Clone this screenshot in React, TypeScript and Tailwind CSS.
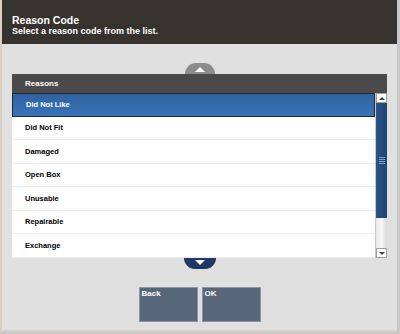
import React from "react"

const reasons = ["Did Not Like", "Did Not Fit", "Damaged", "Open Box", "Unusable", "Repairable", "Exchange"]

function ScrollBar() {
	return (
		<div className="flex w-[12px] flex-col border-l border-[#c8c8c8] bg-[#f0f0f0]">
			<div className="flex h-[10px] items-center justify-center border border-[#a0a0a0] bg-white">
				<div className="h-0 w-0 border-x-[3px] border-b-[3px] border-x-transparent border-b-[#404040]" />
			</div>
			<div className="flex h-[115px] items-center justify-center bg-gradient-to-r from-[#2a5488] to-[#1f4470]">
				<div className="flex flex-col gap-[1px]">
					<div className="h-[1px] w-[6px] bg-[#7f9cc0]" />
					<div className="h-[1px] w-[6px] bg-[#7f9cc0]" />
					<div className="h-[1px] w-[6px] bg-[#7f9cc0]" />
					<div className="h-[1px] w-[6px] bg-[#7f9cc0]" />
				</div>
			</div>
			<div className="flex-1 bg-gradient-to-r from-[#e8e8e8] via-[#f8f8f8] to-[#d8d8d8]" />
			<div className="flex h-[10px] items-center justify-center border border-[#a0a0a0] bg-white">
				<div className="h-0 w-0 border-x-[3px] border-t-[3px] border-x-transparent border-t-[#404040]" />
			</div>
		</div>
	)
}

export default function App() {
	return (
		<div className="h-[334px] w-[400px] bg-[#c8c8c8] pr-[3px] pb-[2px] font-['Liberation_Sans',Arial,sans-serif]">
			<div className="flex h-full flex-col border-l-2 border-b-2 border-[#d8cec4] bg-[#e0e0e0]">
				{/* Header */}
				<div className="h-[44px] bg-[#36332f] px-[10px] pt-[14px] text-white">
					<div className="text-[10.5px] font-bold leading-[12px]">Reason Code</div>
					<div className="text-[9px] font-bold leading-[11px]">Select a reason code from the list.</div>
				</div>

				{/* Up arrow */}
				<div className="mt-[19px] flex justify-center">
					<div className="flex h-[11px] w-[30px] items-end justify-center rounded-t-full bg-[#8c8c8c] pb-[2px]">
						<div className="h-0 w-0 border-x-[5px] border-b-[5px] border-x-transparent border-b-white" />
					</div>
				</div>

				{/* List */}
				<div className="mx-[10px] flex flex-col">
					<div className="flex h-[19px] items-center bg-[#4a4a4a] pl-[13px] text-[8px] font-bold text-white">Reasons</div>
					<div className="flex h-[165px] bg-white">
						<div className="flex flex-1 flex-col">
							{reasons.map((r, i) => (
								<div
									key={i}
									className={
										i === 0
											? "flex h-[23.5px] items-center border border-[#1e2a3a] bg-gradient-to-b from-[#2f62a0] to-[#3a74b6] pl-[13px] text-[7.5px] font-bold text-white"
											: "flex h-[23.5px] items-center border-b border-[#ececec] pl-[13px] text-[7.5px] font-bold text-black"
									}
								>
									{r}
								</div>
							))}
						</div>
						<ScrollBar />
					</div>
				</div>

				{/* Down arrow */}
				<div className="flex justify-center">
					<div className="flex h-[11px] w-[32px] items-start justify-center rounded-b-full bg-[#1e3a62] pt-[2px]">
						<div className="h-0 w-0 border-x-[5px] border-t-[5px] border-x-transparent border-t-white" />
					</div>
				</div>

				{/* Buttons */}
				<div className="mt-[18px] flex justify-center gap-[4px]">
					<div className="h-[35px] w-[59px] border border-[#8a96a4] bg-[#576678] px-[2px] text-[8px] font-bold leading-[12px] text-white">Back</div>
					<div className="h-[35px] w-[59px] border border-[#8a96a4] bg-[#576678] px-[2px] text-[8px] font-bold leading-[12px] text-white">OK</div>
				</div>
			</div>
		</div>
	)
}
